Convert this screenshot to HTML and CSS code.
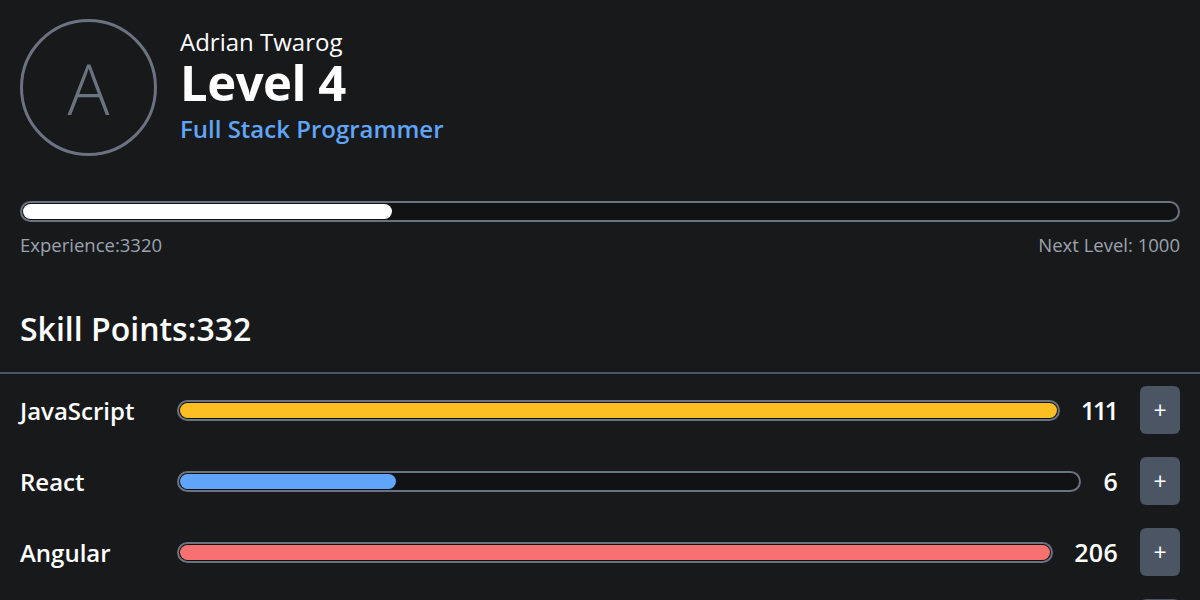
FILE: index.html
```html
<!DOCTYPE html>
<html lang="en">
<head>
<meta charset="utf-8">
<title>Skill Tree</title>
<link rel="stylesheet" href="styles.css">
</head>
<body>
<header class="profile">
  <div class="avatar">A</div>
  <div class="identity">
    <div class="name">Adrian Twarog</div>
    <div class="level">Level 4</div>
    <div class="role">Full Stack Programmer</div>
  </div>
</header>

<section class="xp">
  <div class="track xp-track"><div class="fill fill-white" style="width:32%"></div></div>
  <div class="xp-labels">
    <span>Experience:3320</span>
    <span>Next Level: 1000</span>
  </div>
</section>

<h2 class="points">Skill Points:332</h2>
<div class="divider"></div>

<ul class="skills">
  <li class="skill">
    <span class="skill-name">JavaScript</span>
    <div class="track skill-track"><div class="fill fill-yellow" style="width:100%"></div></div>
    <span class="skill-value">111</span>
    <button class="add">+</button>
  </li>
  <li class="skill">
    <span class="skill-name">React</span>
    <div class="track skill-track"><div class="fill fill-blue" style="width:24%"></div></div>
    <span class="skill-value">6</span>
    <button class="add">+</button>
  </li>
  <li class="skill">
    <span class="skill-name">Angular</span>
    <div class="track skill-track"><div class="fill fill-red" style="width:100%"></div></div>
    <span class="skill-value">206</span>
    <button class="add">+</button>
  </li>
  <li class="skill">
    <span class="skill-name">Vue</span>
    <div class="track skill-track"><div class="fill fill-green" style="width:40%"></div></div>
    <span class="skill-value">9</span>
    <button class="add">+</button>
  </li>
</ul>
</body>
</html>
```

FILE: styles.css
```css
* { box-sizing: border-box; }

html, body {
  margin: 0;
  padding: 0;
  background: #18191b;
  color: #ffffff;
  font-family: "Open Sans", "Noto Sans", "Liberation Sans", sans-serif;
  overflow: hidden;
}

.profile {
  display: flex;
  align-items: flex-start;
  gap: 23px;
  padding: 19px 20px 0 20px;
}

.avatar {
  width: 137px;
  height: 137px;
  border-radius: 50%;
  border: 3px solid #6b7280;
  color: #6b7280;
  font-size: 70px;
  font-weight: 300;
  display: flex;
  align-items: center;
  justify-content: center;
  flex-shrink: 0;
}

.identity {
  display: flex;
  flex-direction: column;
  padding-top: 7px;
}

.name {
  font-size: 24px;
  line-height: 31px;
  font-weight: 400;
}

.level {
  font-size: 49px;
  line-height: 50px;
  font-weight: 700;
  letter-spacing: -0.5px;
}

.role {
  font-size: 24px;
  line-height: 44px;
  font-weight: 600;
  color: #60a5fa;
}

.xp {
  padding: 0 20px;
  margin-top: 45px;
}

.track {
  height: 21px;
  border: 2px solid #6b7280;
  border-radius: 999px;
  padding: 1px;
  background: #111214;
  overflow: hidden;
}

.fill {
  height: 100%;
  border-radius: 999px;
}

.fill-white { background: #ffffff; }
.fill-yellow { background: #fbbf24; }
.fill-blue { background: #60a5fa; }
.fill-red { background: #f87171; }
.fill-green { background: #34d399; }

.xp-labels {
  display: flex;
  justify-content: space-between;
  margin-top: 9px;
  font-size: 18.5px;
  line-height: 28px;
  color: #9ca3af;
}

.points {
  margin: 50px 0 0 0;
  padding: 0 20px;
  font-size: 32px;
  line-height: 40px;
  font-weight: 600;
}

.divider {
  margin-top: 23px;
  height: 2px;
  background: #4b5563;
}

.skills {
  list-style: none;
  margin: 0;
  padding: 12px 20px 0 20px;
  display: flex;
  flex-direction: column;
  gap: 23px;
}

.skill {
  display: flex;
  align-items: center;
  height: 48px;
}

.skill-name {
  width: 157px;
  flex-shrink: 0;
  font-size: 24px;
  font-weight: 600;
}

.skill-track {
  flex: 1;
}

.skill-value {
  margin-left: 22px;
  margin-right: 22px;
  font-size: 25px;
  font-weight: 600;
  text-align: right;
  font-variant-numeric: proportional-nums;
}

.add {
  width: 40px;
  height: 48px;
  border: none;
  border-radius: 6px;
  background: #4b5563;
  color: #ffffff;
  font-family: inherit;
  font-size: 23px;
  font-weight: 400;
  line-height: 1;
  padding: 0;
  cursor: pointer;
}
```
